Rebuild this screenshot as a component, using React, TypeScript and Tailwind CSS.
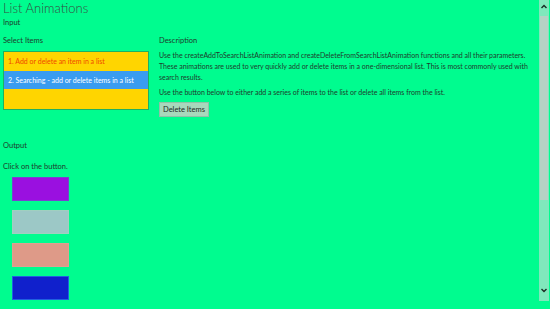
import React from "react";

const F = { fontFamily: 'Lato, "Noto Sans", sans-serif' };

export default function App() {
  return (
    <div className="w-[550px] h-[309px] overflow-hidden bg-[#00fc8f] flex text-[#1f3b2c]" style={F}>
      <div className="flex-1 flex flex-col pl-[3px]">
        <div className="text-[13px] leading-[16px] text-[#3a4a42] font-light">List Animations</div>
        <div className="text-[7.5px] leading-[10px] mt-[2px]">Input</div>
        <div className="flex gap-[10px] mt-[8px]">
          <div className="w-[146px] flex flex-col">
            <div className="text-[7.5px] leading-[10px]">Select Items</div>
            <div className="mt-[5px] border border-[#20b060] bg-[#ffd500] h-[59px] flex flex-col text-[7px]">
              <div className="h-[19px] flex items-center px-[4px] text-[#f04800] whitespace-nowrap">1. Add or delete an item in a list</div>
              <div className="h-[18px] flex items-center px-[4px] bg-[#3a9cf0] text-white whitespace-nowrap">2. Searching - add or delete items in a list</div>
            </div>
          </div>
          <div className="flex-1 flex flex-col text-[7px] leading-[11px] pr-[6px]">
            <div className="text-[7.5px] leading-[10px]">Description</div>
            <p className="mt-[4px]">Use the createAddToSearchListAnimation and createDeleteFromSearchListAnimation functions and all their parameters. These animations are used to very quickly add or delete items in a one-dimensional list. This is most commonly used with search results.</p>
            <p className="mt-[4px]">Use the button below to either add a series of items to the list or delete all items from the list.</p>
            <div className="mt-[4px]">
              <button className="h-[15px] px-[3px] bg-[#a8d8bc] border border-[#90c0a8] text-[7.5px] leading-[12px] text-[#1a2a22]">Delete Items</button>
            </div>
          </div>
        </div>
        <div className="text-[7.5px] leading-[10px] mt-[24px]">Output</div>
        <div className="text-[7.5px] leading-[10px] mt-[11px]">Click on the button.</div>
        <div className="flex flex-col gap-[9px] ml-[9px] mt-[5px]">
          <div className="w-[57px] h-[24px] bg-[#9a10e0] border border-[#7a40d0]" />
          <div className="w-[57px] h-[24px] bg-[#9cc8c6] border border-[#a0d0c0]" />
          <div className="w-[57px] h-[24px] bg-[#de9a88] border border-[#e0a090]" />
          <div className="w-[57px] h-[24px] bg-[#1020cc] border border-[#2060e0]" />
        </div>
      </div>
      <div className="w-[10px] h-[301px] mr-[1px] bg-[#80e8bc] flex flex-col items-center">
        <svg width="8" height="14" viewBox="0 0 8 14" className="shrink-0">
          <path d="M1.5 8 L4 5.5 L6.5 8" fill="none" stroke="#1a2a22" strokeWidth="1.4" />
        </svg>
        <div className="w-[8px] h-[184px] bg-[#b6d2c4] mt-[2px]" />
        <div className="flex-1" />
        <svg width="8" height="14" viewBox="0 0 8 14" className="shrink-0 mb-[4px]">
          <path d="M1.5 6 L4 8.5 L6.5 6" fill="none" stroke="#1a2a22" strokeWidth="1.4" />
        </svg>
      </div>
    </div>
  );
}
